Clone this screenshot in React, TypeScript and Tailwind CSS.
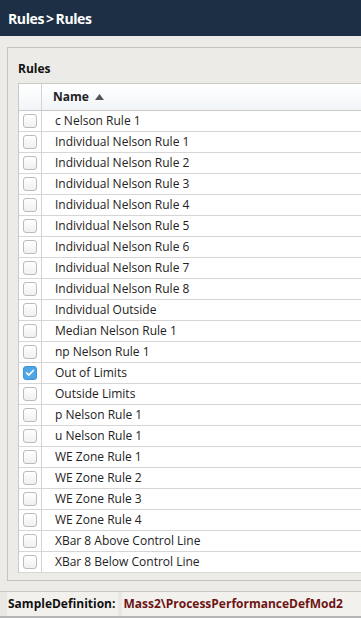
import { Check } from "lucide-react";

const rules = [
  "c Nelson Rule 1",
  "Individual Nelson Rule 1",
  "Individual Nelson Rule 2",
  "Individual Nelson Rule 3",
  "Individual Nelson Rule 4",
  "Individual Nelson Rule 5",
  "Individual Nelson Rule 6",
  "Individual Nelson Rule 7",
  "Individual Nelson Rule 8",
  "Individual Outside",
  "Median Nelson Rule 1",
  "np Nelson Rule 1",
  "Out of Limits",
  "Outside Limits",
  "p Nelson Rule 1",
  "u Nelson Rule 1",
  "WE Zone Rule 1",
  "WE Zone Rule 2",
  "WE Zone Rule 3",
  "WE Zone Rule 4",
  "XBar 8 Above Control Line",
  "XBar 8 Below Control Line",
];

function Box({ checked }: { checked?: boolean }) {
  if (checked) {
    return (
      <span className="flex h-[14px] w-[14px] items-center justify-center rounded-[3px] border border-[#3d93d6] bg-[#4ea6e6]">
        <Check className="h-[10px] w-[10px] text-white" strokeWidth={4} />
      </span>
    );
  }
  return (
    <span className="block h-[14px] w-[14px] rounded-[3px] border border-[#bbbbbb] bg-gradient-to-b from-white to-[#f0f0f0]" />
  );
}

export default function App() {
  return (
    <div className="h-[618px] w-[361px] overflow-hidden bg-[#edebe7] font-['Open_Sans',sans-serif] text-[12px] text-[#222]">
      <div className="flex h-9 items-center gap-[2px] bg-[#1c2f45] px-2 text-[14px] font-bold tracking-[-0.4px] text-white">
        <span>Rules</span>
        <span>&gt;</span>
        <span>Rules</span>
      </div>

      <div className="ml-[7px] mt-[11px] h-[534px] border-b border-l border-t border-[#c4c3bf] pb-[10px] pl-[10px]">
        <div className="flex h-[35px] items-center pt-[6px] text-[12px] font-bold text-[#111]">Rules</div>
        <div className="border-l border-t border-[#c9c9c9] bg-white">
          <div className="flex h-[27px] border-b border-[#c9c9c9] bg-gradient-to-b from-white to-[#f2f5f8]">
            <div className="w-[23px] border-r border-[#d3d3d3]" />
            <div className="flex items-center gap-[6px] pl-[11px] font-bold text-[#222]">
              Name
              <svg width="9" height="6" viewBox="0 0 9 6">
                <path d="M0 6 L4.5 0 L9 6 Z" fill="#555" />
              </svg>
            </div>
          </div>
          {rules.map((r) => (
            <div key={r} className="flex h-[21px] border-b border-[#d6d6d6]">
              <div className="flex w-[23px] items-center justify-center border-r border-[#d3d3d3]">
                <Box checked={r === "Out of Limits"} />
              </div>
              <div className="flex items-center pl-[13px] text-[#222]">{r}</div>
            </div>
          ))}
        </div>
      </div>

      <div className="mt-[10px] flex h-[25px] border-t border-[#c8c6c2] bg-[#e9e7e3]">
        <div className="ml-[7px] flex items-center bg-[#f2f1ee] pl-[1px] pr-[3px] font-bold text-[#111]">
          SampleDefinition:
        </div>
        <div className="ml-[4px] flex flex-1 items-center bg-[#f2f1ee] pl-[1px] font-bold text-[#6e1414]">
          Mass2\ProcessPerformanceDefMod2
        </div>
      </div>
      <div className="h-[2px] bg-[#b5b5b5]" />
    </div>
  );
}
